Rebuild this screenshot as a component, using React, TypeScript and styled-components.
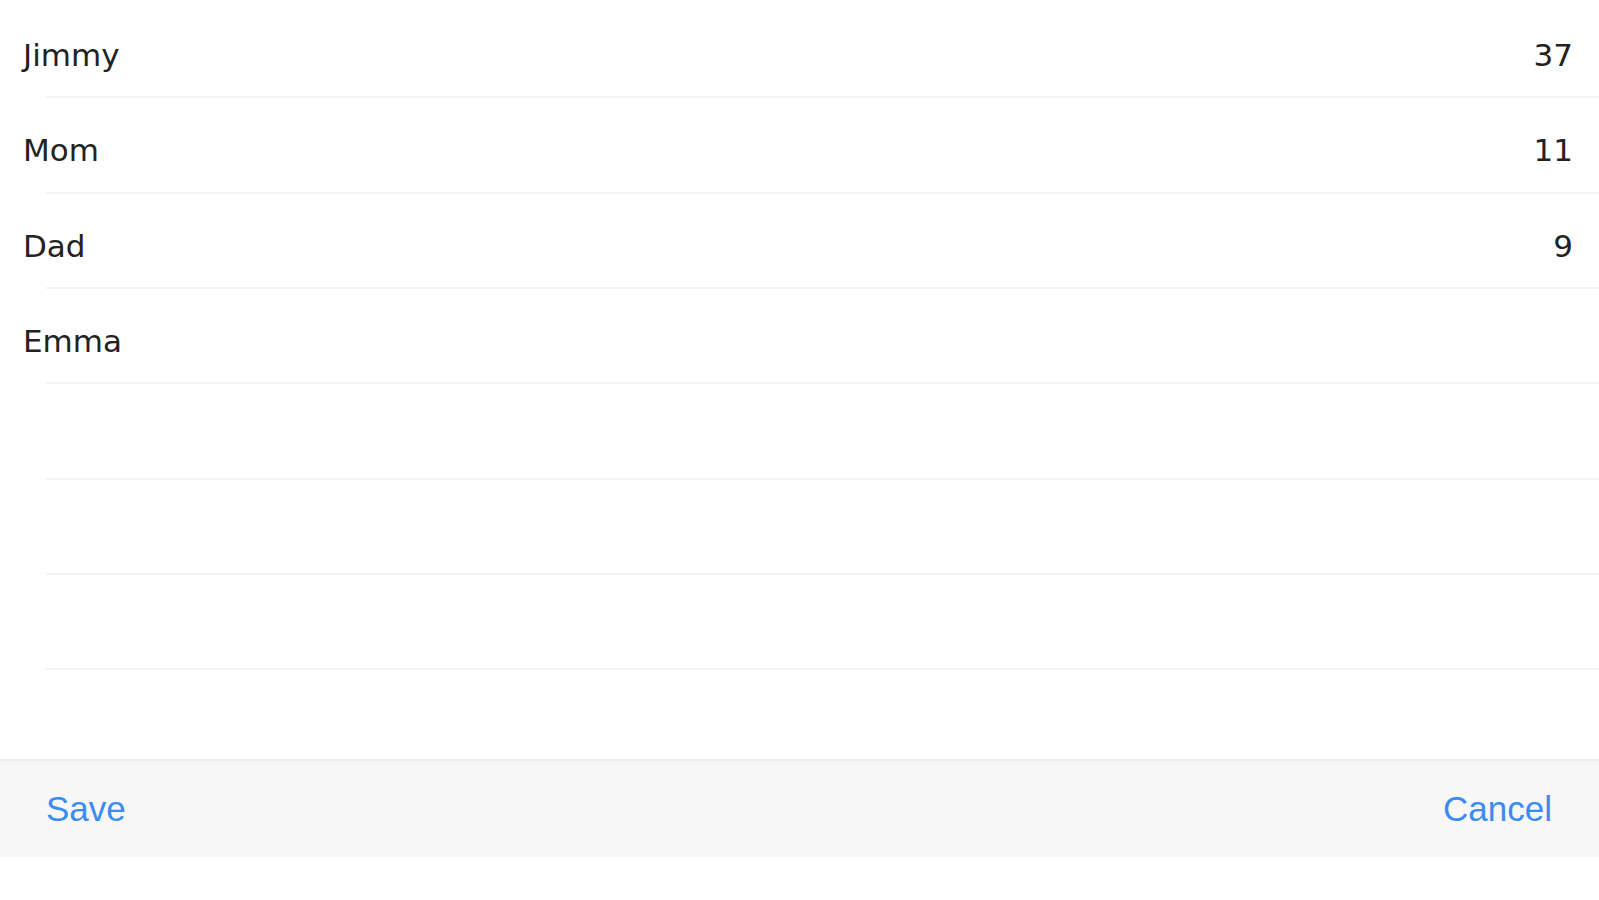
import React from "react";
import styled, { createGlobalStyle } from "styled-components";

const Global = createGlobalStyle`
  html, body { margin: 0; padding: 0; background: #ffffff; }
  body { font-family: "DejaVu Sans", "Noto Sans", sans-serif; }
`;

const Page = styled.div`
  width: 1599px;
  height: 900px;
  display: flex;
  flex-direction: column;
  background: #ffffff;
  overflow: hidden;
`;

const List = styled.ul`
  list-style: none;
  margin: 0;
  padding: 3px 0 0 0;
  height: 759px;
  box-sizing: border-box;
  display: flex;
  flex-direction: column;
`;

const Row = styled.li<{ $separator: boolean }>`
  height: 95.33px;
  flex: 0 0 auto;
  box-sizing: border-box;
  display: flex;
  align-items: center;
  justify-content: space-between;
  padding: 9px 26px 0 23px;
  font-family: "DejaVu Sans", "Noto Sans", sans-serif;
  font-size: 31px;
  color: #222222;
  background: ${(p) =>
    p.$separator
      ? "linear-gradient(#f3f3f3, #f3f3f3) no-repeat 46px 100% / calc(100% - 46px) 2px"
      : "none"};
`;

const Name = styled.span``;

const Count = styled.span`
  text-align: right;
`;

const Footer = styled.footer`
  height: 98px;
  box-sizing: border-box;
  border-top: 2px solid #ececec;
  background: #f7f7f7;
  display: flex;
  align-items: center;
  justify-content: space-between;
  padding: 0 47px 0 46px;
`;

const FooterButton = styled.button`
  border: none;
  background: none;
  padding: 0;
  margin: 0;
  font-family: "Liberation Sans", Arial, sans-serif;
  font-size: 35px;
  color: #3b8cf2;
  cursor: pointer;
`;

const rows: { name: string; count?: number }[] = [
  { name: "Jimmy", count: 37 },
  { name: "Mom", count: 11 },
  { name: "Dad", count: 9 },
  { name: "Emma" },
  { name: "" },
  { name: "" },
  { name: "" },
];

export default function App() {
  return (
    <>
      <Global />
      <Page>
        <List>
          {rows.map((r, i) => (
            <Row key={i} $separator>
              <Name>{r.name}</Name>
              <Count>{r.count ?? ""}</Count>
            </Row>
          ))}
        </List>
        <Footer>
          <FooterButton>Save</FooterButton>
          <FooterButton>Cancel</FooterButton>
        </Footer>
      </Page>
    </>
  );
}
